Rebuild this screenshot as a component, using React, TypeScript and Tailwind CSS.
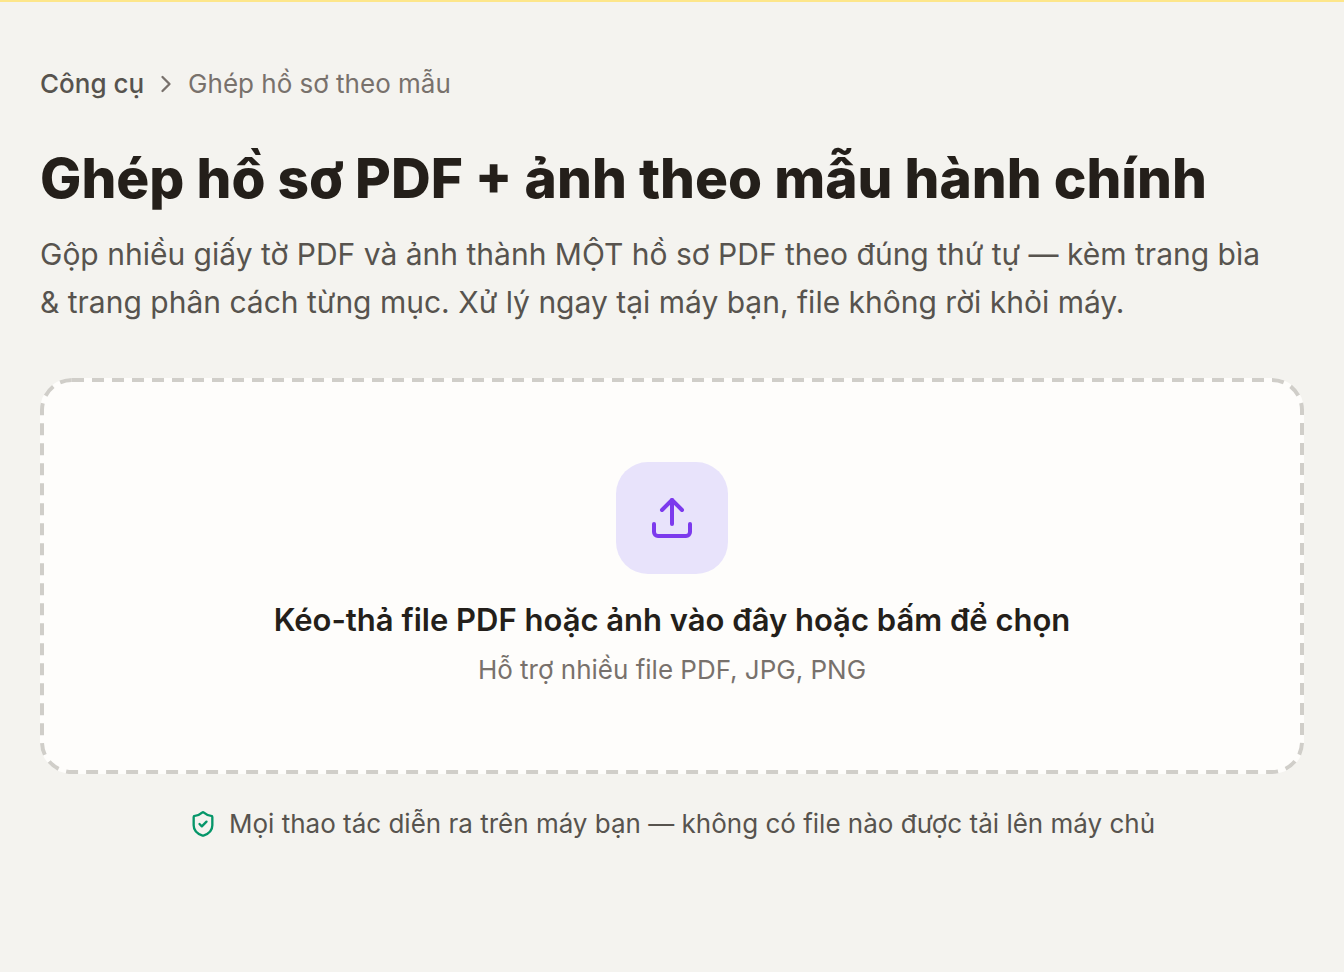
import { useRef } from 'react';
import { ChevronRight, ShieldCheck, Upload } from 'lucide-react';

function Breadcrumb() {
  return (
    <nav aria-label="Breadcrumb">
      <ol className="flex items-center gap-2 text-[26px] leading-9">
        <li>
          <a href="/cong-cu" className="font-medium text-[#57534e]">
            Công cụ
          </a>
        </li>
        <li aria-hidden="true">
          <ChevronRight className="size-7 text-[#78716c]" />
        </li>
        <li aria-current="page" className="text-[#78716c]">
          Ghép hồ sơ theo mẫu
        </li>
      </ol>
    </nav>
  );
}

function DashedOutline() {
  return (
    <svg aria-hidden="true" className="pointer-events-none absolute inset-0 size-full">
      <rect
        x="2"
        y="2"
        rx="30"
        fill="none"
        stroke="#d0cec9"
        strokeWidth="4"
        strokeDasharray="12 8"
        className="h-[calc(100%-4px)] w-[calc(100%-4px)]"
      />
    </svg>
  );
}

function Dropzone() {
  const inputRef = useRef<HTMLInputElement>(null);

  return (
    <div className="mt-13">
      <button
        type="button"
        onClick={() => inputRef.current?.click()}
        className="relative flex w-full cursor-pointer flex-col items-center rounded-[32px] bg-[#fefdfb] px-12 py-21"
      >
        <DashedOutline />
        <span className="flex size-28 items-center justify-center rounded-[32px] bg-[#e8e3fb] text-[#7c3aed]">
          <Upload className="size-12" />
        </span>
        <span className="mt-6 text-[31px] leading-11 font-semibold text-[#241f1a]">
          Kéo-thả file PDF hoặc ảnh vào đây hoặc bấm để chọn
        </span>
        <span className="mt-2 text-[26px] leading-10 text-[#78716c]">Hỗ trợ nhiều file PDF, JPG, PNG</span>
      </button>
      <input
        ref={inputRef}
        type="file"
        multiple
        accept="application/pdf,image/jpeg,image/png"
        aria-label="Kéo-thả file PDF hoặc ảnh vào đây hoặc bấm để chọn"
        className="hidden"
      />
    </div>
  );
}

export default function App() {
  return (
    <div className="min-h-screen border-t-2 border-[#fde68a] bg-[#f4f3ef] font-[Inter,sans-serif] text-[#241f1a]">
      <main className="px-10 pt-16 pb-32">
        <Breadcrumb />
        <h1 className="mt-9 text-[55px] leading-20 font-extrabold">
          Ghép hồ sơ PDF + ảnh theo mẫu hành chính
        </h1>
        <p className="mt-3 pr-6 text-[30px] leading-12 text-[#57534e]">
          Gộp nhiều giấy tờ PDF và ảnh thành MỘT hồ sơ PDF theo đúng thứ tự — kèm trang bìa &amp; trang phân cách
          từng mục. Xử lý ngay tại máy bạn, file không rời khỏi máy.
        </p>
        <Dropzone />
        <p className="mt-8 flex items-center justify-center gap-3 text-[26px] leading-9 text-[#57534e]">
          <ShieldCheck className="size-7 text-[#059669]" />
          Mọi thao tác diễn ra trên máy bạn — không có file nào được tải lên máy chủ
        </p>
      </main>
    </div>
  );
}
